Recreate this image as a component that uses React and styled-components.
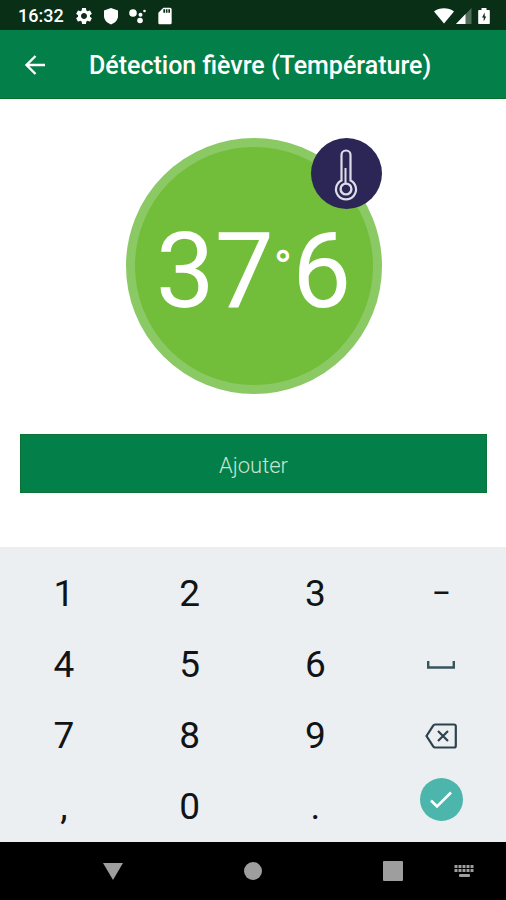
import styled, { createGlobalStyle } from 'styled-components';
import { useState } from 'react';
import { MdSettings, MdSdCard } from 'react-icons/md';

const GlobalStyle = createGlobalStyle`
  * {
    box-sizing: border-box;
  }
  body {
    margin: 0;
    background: #fff;
    font-family: Roboto, "Noto Sans", sans-serif;
  }
  button {
    padding: 0;
    border: 0;
    background: none;
    color: inherit;
    font-family: inherit;
    cursor: pointer;
  }
  svg {
    display: block;
  }
`

const AppWrapper = styled.div`
  display: flex;
  flex-direction: column;
  min-height: 100vh;
`
const StatusBar = styled.div`
  display: flex;
  align-items: center;
  justify-content: space-between;
  height: 30px;
  padding: 1px 16px 0 18px;
  background: #092f17;
  color: #fff;
`
const StatusGroup = styled.div`
  display: flex;
  align-items: center;
  gap: ${props => props.gap};
`
const Clock = styled.span`
  margin-right: 3px;
  font-size: 18px;
  line-height: 24px;
  font-weight: 500;
`
const Header = styled.header`
  display: flex;
  align-items: center;
  gap: 38px;
  height: 69px;
  padding: 3px 19px 0;
  background: #037f4a;
  border-bottom: 1px solid #08702c;
  color: #fff;
`
const BackButton = styled.button`
  width: 32px;
  height: 32px;
`
const Title = styled.h1`
  margin: 0;
  font-size: 25px;
  line-height: 32px;
  font-weight: 500;
  white-space: nowrap;
`
const Content = styled.main`
  flex: 1;
  display: flex;
  flex-direction: column;
  align-items: center;
  gap: 40px;
  padding: 39px 19px 54px 20px;
`
const Gauge = styled.div`
  position: relative;
  display: flex;
  align-items: center;
  justify-content: center;
  width: 256px;
  height: 256px;
  padding-top: 12px;
  border: 9px solid #8bc965;
  border-radius: 50%;
  background: #72bd39;
  color: #fff;
`
const Reading = styled.output`
  display: flex;
  font-size: 105px;
  line-height: 124px;
`
const Degree = styled.span`
  font-size: 48px;
  line-height: 116px;
  font-weight: 500;
`
const Badge = styled.div`
  position: absolute;
  top: -9px;
  right: -9px;
  width: 71px;
  height: 71px;
  border-radius: 50%;
  background: #2b2655;
`
const AddButton = styled.button`
  width: 100%;
  height: 59px;
  padding-top: 3px;
  background: #037f4a;
  border: 1px solid #0b7434;
  color: #c9e4cf;
  font-size: 22px;
  font-weight: 300;
`
const Keypad = styled.div`
  display: grid;
  grid-template-columns: repeat(4, 1fr);
  grid-auto-rows: 71px;
  padding: 11px 2px 0 1px;
  background: #eceff1;
`
const Key = styled.button`
  display: flex;
  align-items: center;
  justify-content: center;
  color: #101417;
  font-size: ${props => props.$small ? '28px' : '37px'};
  font-weight: ${props => props.$small ? 500 : 400};
  line-height: 44px;
`
const DoneKey = styled.button`
  display: flex;
  align-items: center;
  justify-content: center;
  justify-self: center;
  width: 43px;
  height: 43px;
  margin-top: 7px;
  border-radius: 50%;
  background: #4db6ac;
`
const NavBar = styled.nav`
  display: flex;
  gap: 31px;
  height: 58px;
  padding: 0 22px 0 93px;
  background: #000;
`
const NavGroup = styled.div`
  flex: 1;
  display: flex;
  justify-content: space-between;
`
const NavButton = styled.button`
  display: flex;
  align-items: center;
  justify-content: center;
  width: 40px;
  fill: #9e9e9e;
`

const ShieldIcon = () => (
  <svg width="20" height="20" viewBox="0 0 20 20" fill="currentColor">
    <path d="M10 2 17 4.500V10c0 4-3 7-7 8.500C6 17 3 14 3 10V4.500Z" />
  </svg>
)

const AssistantIcon = () => (
  <svg width="20" height="20" viewBox="0 0 20 20" fill="currentColor">
    <circle cx="5" cy="7" r="3.800" />
    <circle cx="12.500" cy="8.800" r="2" />
    <circle cx="12" cy="14.500" r="2.800" />
    <circle cx="16.500" cy="5" r="1.300" />
  </svg>
)

const WifiIcon = () => (
  <svg width="20" height="16" viewBox="0 0 20 16" fill="currentColor">
    <path d="M0 3.600C5.500-.8 14.500-.8 20 3.600L10 15.600Z" />
  </svg>
)

const SignalIcon = () => (
  <svg width="16" height="16" viewBox="0 0 16 16" fill="currentColor">
    <path d="M15.500 0v16H0Z" opacity=".3" />
    <path d="M9.500 6v10H0Z" />
  </svg>
)

const BatteryIcon = () => (
  <svg width="12" height="18" viewBox="0 0 12 18">
    <path d="M3.500 1h5v2H11a.8.8 0 0 1 .8.8v12.400a.8.8 0 0 1-.8.8H1a.8.8 0 0 1-.8-.8V3.800A.8.8 0 0 1 1 3h2.500Z" fill="#fff" />
    <path d="M6.700 5.500 4 10.500h1.700v4l2.500-5H6.700Z" fill="#092f17" />
  </svg>
)

const BackIcon = () => (
  <svg width="32" height="32" viewBox="0 0 32 32" fill="none" stroke="currentColor" strokeWidth="2.400">
    <path d="M26 15H8M16.500 6 7.500 15l9 9" />
  </svg>
)

const ThermometerIcon = () => (
  <svg width="71" height="71" viewBox="0 0 71 71" fill="none" stroke="#dedce8" strokeWidth="2.200">
    <path d="M30.500 42.500V17a4.500 4.500 0 0 1 9 0v25.500a10 10 0 1 1-9 0Z" />
    <path d="M34.500 45V30" strokeWidth="2" />
    <circle cx="35" cy="51" r="5.400" strokeWidth="2.400" />
  </svg>
)

const SpaceIcon = () => (
  <svg width="28" height="8" viewBox="0 0 28 8" fill="none" stroke="#37545c" strokeWidth="2.400">
    <path d="M1.200 0v6.500h25.600V0" />
  </svg>
)

const BackspaceIcon = () => (
  <svg width="32" height="26" viewBox="0 0 32 26" fill="none" stroke="#2c434e" strokeWidth="2.200">
    <path d="M10 1.500h19a1.800 1.800 0 0 1 1.800 1.800v19.400a1.800 1.800 0 0 1-1.800 1.800H10Q9 24.500 8.200 23.300L1.500 13 8.200 2.700Q9 1.500 10 1.500Z" />
    <path d="m13 8 10 10M23 8 13 18" />
  </svg>
)

const CheckIcon = () => (
  <svg width="24" height="20" viewBox="0 0 24 20" fill="none" stroke="#fff" strokeWidth="2.600">
    <path d="m2 10.500 6 6L22 2.500" />
  </svg>
)

const KeyboardIcon = () => (
  <svg width="20" height="12" viewBox="0 0 20 12">
    {[0, 4, 8, 12, 16].map((x) => (
      <g key={x}>
        <rect x={x + 0.5} y="0" width="3" height="3" />
        <rect x={x + 0.5} y="4" width="3" height="3" />
      </g>
    ))}
    <rect x="5" y="9" width="11" height="3" rx="1" />
  </svg>
)

const keys = [
  '1', '2', '3', '–',
  '4', '5', '6', 'space',
  '7', '8', '9', 'delete',
  ',', '0', '.'
]

function App() {

  const [digits, setDigits] = useState("376")

  const handleKey = (key) => {
    if (key === 'delete') {
      setDigits((prev) => prev.slice(0, -1))
      return
    }
    if (!/\d/.test(key) || digits.length === 3) {
      return
    }
    setDigits((prev) => prev + key)
  }

  const renderKey = (key) => {
    if (key === 'space') return <SpaceIcon />
    if (key === 'delete') return <BackspaceIcon />
    return key
  }

  return (
    <AppWrapper>
      <GlobalStyle />
      <StatusBar>
        <StatusGroup gap="7px">
          <Clock>16:32</Clock>
          <MdSettings size={20} />
          <ShieldIcon />
          <AssistantIcon />
          <MdSdCard size={20} />
        </StatusGroup>
        <StatusGroup gap="6px">
          <StatusGroup gap="2px">
            <WifiIcon />
            <SignalIcon />
          </StatusGroup>
          <BatteryIcon />
        </StatusGroup>
      </StatusBar>
      <Header>
        <BackButton aria-label="Retour"><BackIcon /></BackButton>
        <Title>Détection fièvre (Température)</Title>
      </Header>
      <Content>
        <Gauge>
          <Reading>
            {digits.slice(0, 2)}
            <Degree>°</Degree>
            {digits.slice(2)}
          </Reading>
          <Badge><ThermometerIcon /></Badge>
        </Gauge>
        <AddButton>Ajouter</AddButton>
      </Content>
      <Keypad>
        {keys.map((key) => (
          <Key key={key} $small={key === '–'} aria-label={key} onClick={() => handleKey(key)}>{renderKey(key)}</Key>
        ))}
        <DoneKey aria-label="OK"><CheckIcon /></DoneKey>
      </Keypad>
      <NavBar>
        <NavGroup>
          <NavButton aria-label="Fermer le clavier">
            <svg width="22" height="18" viewBox="0 0 22 18"><path d="M1 1h20L11 18Z" /></svg>
          </NavButton>
          <NavButton aria-label="Accueil">
            <svg width="18" height="18" viewBox="0 0 18 18"><circle cx="9" cy="9" r="9" /></svg>
          </NavButton>
          <NavButton aria-label="Applications">
            <svg width="20" height="20" viewBox="0 0 20 20"><rect width="20" height="20" rx="1" /></svg>
          </NavButton>
        </NavGroup>
        <NavButton aria-label="Clavier"><KeyboardIcon /></NavButton>
      </NavBar>
    </AppWrapper>
  );
}

export default App;
